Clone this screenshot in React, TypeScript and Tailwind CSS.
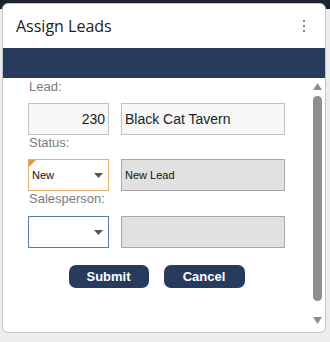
import React from 'react';

const Caret: React.FC = () => (
  <svg width="9" height="5" viewBox="0 0 9 5" className="block">
    <polygon points="0,0 9,0 4.5,5" fill="#555555" />
  </svg>
);

const Label: React.FC<{ text: string; mb: string }> = ({ text, mb }) => (
  <div className={`h-4 pl-px text-[13px] leading-4 text-[#7b7b7b] ${mb}`}>{text}</div>
);

const App: React.FC = () => {
  return (
    <div className="h-[342px] w-[330px] overflow-hidden bg-[linear-gradient(#1d2230_0_9px,#ededed_9px)] pl-[2px] pr-[4px] pt-[3px] font-['Liberation_Sans',Arial,sans-serif]">
      <div className="flex h-[330px] w-[324px] flex-col overflow-hidden rounded-[6px] border border-[#c4c4c4] bg-white">
        {/* Header */}
        <div className="flex h-[44px] shrink-0 items-center justify-between pl-[13px] pr-[20px]">
          <span className="font-['Open_Sans',sans-serif] text-[16px] text-[#222222]">Assign Leads</span>
          <div className="flex flex-col gap-[2.5px]">
            <span className="h-[2.5px] w-[2.5px] rounded-full bg-[#5f5f5f]"></span>
            <span className="h-[2.5px] w-[2.5px] rounded-full bg-[#5f5f5f]"></span>
            <span className="h-[2.5px] w-[2.5px] rounded-full bg-[#5f5f5f]"></span>
          </div>
        </div>

        {/* Navy band */}
        <div className="h-[30px] shrink-0 bg-[#293a5f]"></div>

        {/* Body */}
        <div className="flex flex-1">
          <div className="flex-1 pl-[25px] pt-px">
            <Label text="Lead:" mb="mb-[8px]" />
            <div className="flex gap-[12px]">
              <div className="flex h-[32px] w-[81px] items-center justify-end border border-[#c2c2c2] bg-[#f7f7f7] pr-[3px] text-[14px] text-[#222222]">
                230
              </div>
              <div className="flex h-[32px] w-[164px] items-center border border-[#c2c2c2] bg-[#f7f7f7] pl-[3px] text-[14px] text-[#222222]">
                Black Cat Tavern
              </div>
            </div>

            <Label text="Status:" mb="mb-[8px]" />
            <div className="flex gap-[12px]">
              <div className="relative flex h-[32px] w-[81px] items-center justify-between border border-[#e2b16c] bg-white pl-[3px] pr-[5px] text-[11px] text-[#111111]">
                <svg width="7" height="7" viewBox="0 0 7 7" className="absolute left-0 top-0">
                  <polygon points="0,0 7,0 0,7" fill="#e39a3c" />
                </svg>
                <span>New</span>
                <Caret />
              </div>
              <div className="flex h-[32px] w-[164px] items-center border border-[#a8a8a8] bg-[#e1e1e1] pl-[3px] text-[11px] text-[#111111]">
                New Lead
              </div>
            </div>

            <Label text="Salesperson:" mb="mb-[9px]" />
            <div className="flex gap-[12px]">
              <div className="flex h-[32px] w-[81px] items-center justify-end border border-[#5a79b0] bg-white pr-[5px]">
                <Caret />
              </div>
              <div className="h-[32px] w-[164px] border border-[#a8a8a8] bg-[#e1e1e1]"></div>
            </div>

            <div className="mt-[17px] flex w-[257px] justify-center gap-[15px]">
              <button className="h-[23px] w-[80px] rounded-[7px] bg-[#293a5f] text-[13px] font-bold text-white">
                Submit
              </button>
              <button className="h-[23px] w-[81px] rounded-[7px] bg-[#293a5f] text-[13px] font-bold text-white">
                Cancel
              </button>
            </div>
          </div>

          {/* Scrollbar */}
          <div className="flex w-[14px] flex-col items-center pr-[2px] pt-[5px]">
            <svg width="9" height="7" viewBox="0 0 9 7" className="block">
              <polygon points="4.5,0 9,7 0,7" fill="#8e8e8e" />
            </svg>
            <div className="mt-[6px] h-[205px] w-[9px] rounded-full bg-[#8e8e8e]"></div>
            <svg width="9" height="7" viewBox="0 0 9 7" className="mt-[16px] block">
              <polygon points="0,0 9,0 4.5,7" fill="#8e8e8e" />
            </svg>
          </div>
        </div>
      </div>
    </div>
  );
};

export default App;
